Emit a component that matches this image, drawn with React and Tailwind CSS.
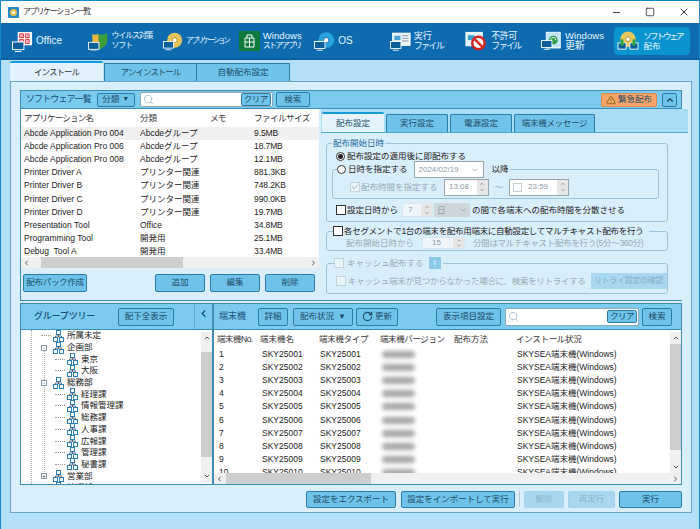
import { Minus, Square, X, Search, ChevronUp, ChevronDown, ChevronLeft, ChevronRight, RotateCw, TriangleAlert, Check } from 'lucide-react'

const apps = [
  ['Abcde Application Pro 004', 'Abcdeグループ', '9.5MB'],
  ['Abcde Application Pro 006', 'Abcdeグループ', '18.7MB'],
  ['Abcde Application Pro 008', 'Abcdeグループ', '12.1MB'],
  ['Printer Driver A', 'プリンター関連', '881.3KB'],
  ['Printer Driver B', 'プリンター関連', '748.2KB'],
  ['Printer Driver C', 'プリンター関連', '990.0KB'],
  ['Printer Driver D', 'プリンター関連', '19.7MB'],
  ['Presentation Tool', 'Office', '34.8MB'],
  ['Programming Tool', '開発用', '25.1MB'],
  ['Debug  Tool A', '開発用', '33.4MB'],
]

const tree = [
  [1, '所属未定'], [1, '企画部', '-'], [2, '東京'], [2, '大阪'], [1, '総務部', '-'],
  [2, '経理課'], [2, '情報管理課'], [2, '総務課'], [2, '人事課'], [2, '広報課'],
  [2, '管理課'], [2, '秘書課'], [1, '営業部', '+'], [1, '技術部', '+'],
]

const terminals = Array.from({ length: 10 }, (_, i) => i + 1)

function Monitor({ x = 0, y = 13 }) {
  return (
    <g transform={`translate(${x} ${y})`}>
      <rect x="0.5" y="0.5" width="12" height="8" fill="#0d5f9c" stroke="#fff" />
      <path d="M3 10.5h7" stroke="#fff" />
    </g>
  )
}

function ToolIcon({ name }) {
  if (name === 'office') return (
    <svg width="21" height="21" viewBox="0 0 22 22">
      <rect x="6" y="1" width="15" height="14" fill="#fff" />
      <path d="M8 3h4v4H8zM14 3h4v4h-4zM8 9h4v4H8zM14 9h4v4h-4z" fill="#fbd" stroke="#d8342c" />
      <Monitor x={0} y={11} />
    </svg>
  )
  if (name === 'virus') return (
    <svg width="21" height="20" viewBox="0 0 24 22">
      <path d="M12 3c4 1 6 1 10-1v9c0 5-5 8-10 10z" fill="#3f9c3a" />
      <path d="M12 3C9 4 7 4 5 3v9c0 3 3 7 7 9z" fill="#eab83c" />
      <Monitor x={0} y={12} />
    </svg>
  )
  if (name === 'app') return (
    <svg width="20" height="20" viewBox="0 0 24 22">
      <circle cx="14" cy="10" r="9" fill="#e6c25a" />
      <circle cx="14" cy="10" r="3" fill="#fff" stroke="#a98b2d" />
      <Monitor x={0} y={11} />
    </svg>
  )
  if (name === 'store') return (
    <svg width="21" height="20" viewBox="0 0 21 20">
      <rect width="21" height="20" fill="#0f7a3e" />
      <path d="M6 7h9v9H6zM8 7V4h5v3M10.500 7v9M6 11h9" fill="none" stroke="#fff" />
    </svg>
  )
  if (name === 'os') return (
    <svg width="21" height="20" viewBox="0 0 24 22">
      <circle cx="14" cy="10" r="9" fill="#29a3dc" />
      <circle cx="14" cy="10" r="3" fill="#fff" stroke="#0d5f9c" />
      <Monitor x={0} y={11} />
    </svg>
  )
  if (name === 'exe') return (
    <svg width="21" height="20" viewBox="0 0 24 22">
      <rect x="3" y="2" width="20" height="14" fill="#e7f3fa" stroke="#fff" />
      <rect x="5" y="5" width="7" height="5" fill="#4aa3d0" />
      <path d="M14 5h7M14 8h7M14 11h7" stroke="#889" />
      <Monitor x={0} y={11} />
    </svg>
  )
  if (name === 'ban') return (
    <svg width="23" height="22" viewBox="0 0 24 22">
      <rect x="1" y="2" width="17" height="14" fill="#dff1fa" stroke="#fff" />
      <rect x="3" y="5" width="7" height="5" fill="#37a0cf" />
      <circle cx="14" cy="13" r="6.500" fill="#fff" stroke="#d4231f" strokeWidth="2.500" />
      <path d="M10 9l8 8" stroke="#d4231f" strokeWidth="2.500" />
    </svg>
  )
  if (name === 'update') return (
    <svg width="21" height="20" viewBox="0 0 24 22">
      <rect x="6" y="1" width="16" height="18" fill="#bfe4f5" stroke="#fff" />
      <circle cx="14" cy="10" r="5" fill="#2f9c46" />
      <path d="M11 10a3 3 0 0 1 6 0" stroke="#fff" fill="none" />
      <Monitor x={0} y={10} />
    </svg>
  )
  return (
    <svg width="24" height="20" viewBox="0 0 26 22">
      <circle cx="13" cy="9" r="8.500" fill="#e6c95e" />
      <circle cx="13" cy="9" r="2.500" fill="#fff" stroke="#a98b2d" />
      <path d="M2 13h9v7H2zM15 13h9v7h-9z" fill="#0d5f9c" stroke="#fff" />
      <path d="M5 9h3v4h2l-3.500 4L3 13h2zM18 9h3v4h2l-3.500 4L16 13h2z" fill="#35a24a" />
    </svg>
  )
}

function ToolItem({ icon, lines, active }) {
  return (
    <div className={`flex h-[28px] items-center gap-[3px] rounded-sm pl-[2px] ${active ? 'bg-[#0a94cf]' : ''}`}>
      <ToolIcon name={icon} />
      <div className="flex flex-col leading-[10.500px] text-[#e8f6ff]">
        {lines.map(([t, c]) => <span key={t} className={c}>{t}</span>)}
      </div>
    </div>
  )
}

function Btn({ children, className = '', disabled }) {
  return (
    <button className={`flex items-center justify-center rounded-[2px] border text-[8.500px] ${disabled ? 'border-[#a4d3ea] bg-[#a8d8ef] text-[#8ab4c9]' : 'border-[#2a7da6] bg-[#6fc3ea] text-[#1c4d69]'} ${className}`}>
      {children}
    </button>
  )
}

function SearchBox({ className = '' }) {
  return (
    <div className={`flex items-center rounded-[2px] border border-[#8fa8b8] bg-white pl-[2px] ${className}`}>
      <Search size={11} className="text-[#a9c0d0]" />
      <Btn className="ml-auto h-[13px] w-[30px] tracking-[-0.500px]">クリア</Btn>
    </div>
  )
}

function HScroll({ left, thumb }) {
  return (
    <div className="flex h-[11px] shrink-0 items-center bg-[#f0f0f0] text-[#555]">
      <ChevronLeft size={8} strokeWidth={3} className="w-[11px] shrink-0" />
      <div className="h-full flex-1">
        <div className="h-full bg-[#cdcdcd]" style={{ width: thumb, marginLeft: left }} />
      </div>
      <ChevronRight size={8} strokeWidth={3} className="w-[11px] shrink-0" />
    </div>
  )
}

function VScroll({ thumbTop, thumb, className = '' }) {
  return (
    <div className={`flex w-[11px] shrink-0 flex-col items-center bg-[#f0f0f0] text-[#555] ${className}`}>
      <ChevronUp size={8} strokeWidth={3} className="h-[12px] shrink-0" />
      <div className="w-full flex-1">
        <div className="w-full bg-[#cdcdcd]" style={{ height: thumb, marginTop: thumbTop }} />
      </div>
      <ChevronDown size={8} strokeWidth={3} className="h-[12px] shrink-0" />
    </div>
  )
}

function Spin({ value, className = '', boxed, dim }) {
  return (
    <div className={`flex items-center border bg-white ${dim ? 'border-[#dbe6ee] text-[#8a9aa5]' : 'border-[#9aa5ad] text-[#8a9aa5]'} ${className}`}>
      {boxed && <span className="ml-[3px] h-[9px] w-[9px] border border-[#c3ccd2]" />}
      <span className="flex-1 pr-[3px] text-center text-[8px]">{value}</span>
      <span className="flex h-full w-[11px] flex-col items-center justify-center bg-[#e6e6e6] text-[#888]">
        <ChevronUp size={6} strokeWidth={3} />
        <ChevronDown size={6} strokeWidth={3} />
      </span>
    </div>
  )
}

function GroupIcon() {
  return (
    <svg width="11" height="12" viewBox="0 0 11 12" className="shrink-0">
      <path d="M5.500 3v4M2.500 8V6h6v2" stroke="#335" fill="none" strokeWidth="0.700" />
      <rect x="3.500" y="0.500" width="4" height="4" fill="#fff" stroke="#2a7fb8" />
      <rect x="0.500" y="7.500" width="4" height="4" fill="#fff" stroke="#2a7fb8" />
      <rect x="6.500" y="7.500" width="4" height="4" fill="#fff" stroke="#2a7fb8" />
    </svg>
  )
}

function TreeRow({ depth, label, toggle }) {
  return (
    <div className={`flex h-[11.700px] items-center ${depth === 1 ? 'pl-[20px]' : 'pl-[34px]'}`}>
      <span className="relative flex w-[12px] shrink-0 items-center">
        {toggle && (
          <span className="absolute left-0 flex h-[6px] w-[6px] items-center justify-center border border-[#8a9aa5] bg-white text-[6px] leading-none text-[#335]">{toggle}</span>
        )}
        {!toggle && <span className="h-0 w-[10px] border-t border-dotted border-[#999]" />}
      </span>
      <GroupIcon />
      <span className={`ml-[3px] text-[8.500px] leading-[11px] ${label === '総務部' ? 'bg-[#f0f0f0]' : ''}`}>{label}</span>
    </div>
  )
}

function Radio({ on, dim }) {
  return (
    <span className={`flex h-[9px] w-[9px] shrink-0 items-center justify-center rounded-full border bg-white ${dim ? 'border-[#aaa]' : 'border-[#333]'}`}>
      {on && <span className="h-[5px] w-[5px] rounded-full bg-[#222]" />}
    </span>
  )
}

function Box({ checked, dim }) {
  return (
    <span className={`flex h-[10px] w-[10px] shrink-0 items-center justify-center border ${dim ? 'border-[#c6d3dc] bg-[#eaf4fb]' : 'border-[#333] bg-white'}`}>
      {checked && <Check size={8} strokeWidth={3} className="text-[#9fb0bb]" />}
    </span>
  )
}

function SoftwareTable() {
  return (
    <div className="flex w-[298px] shrink-0 flex-col">
      <div className="flex h-[159px] flex-col overflow-hidden bg-white text-[#222]">
        <div className="flex h-[18px] shrink-0 items-center text-[#333]">
          <span className="w-[117px] pl-[3px] tracking-[-0.800px]">アプリケーション名</span>
          <span className="w-[70px] pl-[2px]">分類</span>
          <span className="w-[43px] pl-[2px] tracking-[-0.500px]">メモ</span>
          <span className="pl-[3px] tracking-[-0.500px]">ファイルサイズ</span>
        </div>
        <div className="min-h-0 flex-1 overflow-hidden">
          {apps.map((a, i) => (
            <div key={a[0]} className={`flex h-[13.100px] items-center whitespace-pre leading-[13px] ${i === 0 ? 'bg-[#f0f0f0]' : ''}`}>
              <span className="w-[117px] pl-[3px] text-[8.500px]">{a[0]}</span>
              <span className="w-[113px] pl-[2px]">{a[1]}</span>
              <span className="pl-[3px] tracking-[-0.100px]">{a[2]}</span>
            </div>
          ))}
        </div>
        <HScroll left={9} thumb={142} />
      </div>
      <div className="flex flex-1 items-center gap-[5px] pb-[3px] pl-[2px] pr-[4px]">
        <Btn className="mr-auto h-[18px] w-[64px] tracking-[-0.300px]">配布パック作成</Btn>
        <Btn className="h-[18px] w-[50px]">追加</Btn>
        <Btn className="h-[18px] w-[50px]">編集</Btn>
        <Btn className="h-[18px] w-[50px]">削除</Btn>
      </div>
    </div>
  )
}

function DistPanel() {
  return (
    <div className="flex flex-1 flex-col pl-[2px]">
      <div className="flex h-[24px] shrink-0 items-end gap-[2px] border-b border-[#4ea8d2] bg-[#a9dcf5] pl-[1px]">
        <div className="flex h-[20px] w-[62px] items-center justify-center rounded-t-[2px] border-t-2 border-[#159bd6] bg-[#e4f3fc] text-[#1c4d69]">配布設定</div>
        {[['実行設定', 'w-[62px]'], ['電源設定', 'w-[62px]'], ['端末機メッセージ', 'w-[81px] tracking-[-0.300px]']].map(([t, w]) => (
          <div key={t} className={`flex h-[18px] items-center justify-center rounded-t-[2px] border border-b-0 border-[#2a7da6] bg-[#6fc3ea] text-[#1c4d69] ${w}`}>{t}</div>
        ))}
      </div>
      <div className="flex flex-1 flex-col bg-[#d9eefb] pl-[5px] pr-[20px] text-[#222]">
        <fieldset className="mt-[4px] h-[85px] shrink-0 rounded-[3px] border border-[#9cc3da] pl-[5px] pr-[8px]">
          <legend className="px-[1px] leading-[12px] text-[#17669c]">配布開始日時</legend>
          <div className="mt-[1px] flex h-[13px] items-center gap-[2px] pl-[4px]"><Radio on />配布設定の適用後に即配布する</div>
          <fieldset className="mt-[-2px] h-[38px] rounded-[3px] border border-[#9cc3da]">
            <legend className="ml-[4px] flex h-[17px] items-center">
              <Radio /><span className="ml-[2px]">日時を指定する</span>
              <span className="ml-[6px] flex h-[17px] w-[70px] items-center justify-between border border-[#9aa5ad] bg-white px-[4px] text-[8px] text-[#8a9aa5]">2024/02/19<ChevronDown size={8} /></span>
              <span className="ml-[8px] pr-[1px]">以降</span>
            </legend>
            <div className="flex h-[18px] items-center pl-[17px] text-[#9aa9b3]">
              <Box checked dim /><span className="ml-[1px]">配布時間を指定する</span>
              <Spin value="13:08" className="ml-[6px] h-[17px] w-[45px]" />
              <span className="mx-[6px]">～</span>
              <Spin value="23:59" boxed className="h-[17px] w-[60px]" />
            </div>
          </fieldset>
          <div className="mt-[4px] flex h-[14px] items-center pl-[4px]">
            <Box /><span className="ml-[1px]">設定日時から</span>
            <Spin value="7" dim className="ml-[4px] h-[14px] w-[31px] !bg-[#eef6fc]" />
            <span className="ml-[1px] flex h-[14px] w-[36px] items-center justify-between bg-[#cfd6db] px-[3px] text-[#8a9aa5]">日<ChevronDown size={8} /></span>
            <span className="ml-[2px]">の間で各端末への配布時間を分散させる</span>
          </div>
        </fieldset>
        <fieldset className="mt-[2px] h-[27px] shrink-0 rounded-[3px] border border-[#9cc3da] pl-[5px]">
          <legend className="ml-[1px] flex h-[14px] items-center gap-[1px] pr-[6px] tracking-[-0.300px]"><Box />各セグメントで1台の端末を配布用端末に自動設定してマルチキャスト配布を行う</legend>
          <div className="-mt-[1px] flex h-[12px] items-center pl-[14px] text-[#9aa9b3]">
            配布開始日時から
            <Spin value="15" dim className="ml-[8px] mr-[8px] h-[12px] w-[43px] !bg-[#eef6fc]" />
            <span className="tracking-[-0.300px]">分間はマルチキャスト配布を行う(5分～360分)</span>
          </div>
        </fieldset>
        <fieldset className="mt-[5px] h-[38px] shrink-0 rounded-[3px] border border-[#9cc3da] pl-[5px] text-[#9aa9b3]">
          <legend className="ml-[2px] flex h-[14px] items-center gap-[3px] pr-[2px]">
            <Box dim />キャッシュ配布する
            <span className="ml-[2px] flex h-[12px] w-[12px] items-center justify-center bg-[#8cc9e8] text-[8px] text-white">i</span>
          </legend>
          <div className="flex h-[22px] items-center gap-[2px] pl-[4px] tracking-[-0.300px]">
            <Box dim />キャッシュ端末が見つからなかった場合に、検索をリトライする
            <span className="ml-[3px] flex h-[16px] w-[76px] items-center justify-center bg-[#a8d8ef] text-[8px] tracking-[-0.300px] text-[#7fb0c9]">リトライ設定の確認</span>
          </div>
        </fieldset>
      </div>
    </div>
  )
}

function GroupTree() {
  return (
    <div className="flex w-[193px] shrink-0 flex-col border border-[#3f8cb5]">
      <div className="flex h-[25px] shrink-0 items-center bg-[#7bcbee] pl-[13px]">
        <span className="text-[9px] font-medium tracking-[-0.200px] text-[#17507a]">グループツリー</span>
        <Btn className="ml-[23px] h-[18px] w-[56px]">配下全表示</Btn>
        <span className="ml-[20px] flex h-full flex-1 justify-center border-l border-[#5aa9d0] pt-[4px] text-[#17507a]"><ChevronLeft size={11} strokeWidth={3} /></span>
      </div>
      <div className="flex min-h-0 flex-1 border-t border-[#3f8cb5] bg-white text-[#222]">
        <div className="relative flex-1 overflow-hidden">
          <div className="absolute bottom-0 left-[10px] top-0 border-l border-dotted border-[#aaa]" />
          <div className="absolute bottom-[10px] left-[23px] top-[15px] border-l border-dotted border-[#aaa]" />
          <div className="mt-0">
            {tree.map((t, i) => <TreeRow key={i} depth={t[0]} label={t[1]} toggle={t[2]} />)}
          </div>
        </div>
        <VScroll thumbTop={8} thumb={105} className="my-[2px]" />
      </div>
    </div>
  )
}

function TerminalPanel() {
  return (
    <div className="flex flex-1 flex-col border border-[#3f8cb5]">
      <div className="flex h-[25px] shrink-0 items-center gap-[2px] bg-[#7bcbee] pl-[5px]">
        <span className="w-[37px] text-[9px] text-[#17507a]">端末機</span>
        <Btn className="h-[18px] w-[30px]">詳細</Btn>
        <Btn className="ml-[3px] h-[18px] w-[60px] gap-[4px]">配布状況<span className="text-[8px]">▼</span></Btn>
        <Btn className="ml-[1px] h-[18px] w-[42px] gap-[2px]"><RotateCw size={11} strokeWidth={2.500} />更新</Btn>
        <Btn className="ml-[36px] h-[18px] w-[65px]">表示項目設定</Btn>
        <SearchBox className="ml-[2px] h-[18px] w-[134px] pr-[1px]" />
        <Btn className="ml-[1px] h-[18px] w-[30px]">検索</Btn>
      </div>
      <div className="flex min-h-0 flex-1 flex-col border-t border-[#3f8cb5] bg-white text-[#222]">
        <div className="flex min-h-0 flex-1">
          <div className="flex-1 overflow-hidden">
            <div className="flex h-[18px] items-center text-[#333]">
              <span className="w-[44px] pl-[3px] tracking-[-0.500px]">端末機No.</span>
              <span className="w-[59px] pl-[2px]">端末機名</span>
              <span className="w-[60px] pl-[2px] tracking-[-0.300px]">端末機タイプ</span>
              <span className="w-[75px] pl-[3px] tracking-[-0.400px]">端末機バージョン</span>
              <span className="w-[62px] pl-[2px]">配布方法</span>
              <span className="pl-[2px] tracking-[-0.300px]">インストール状況</span>
            </div>
            {terminals.map(n => {
              const id = `SKY250${String(n).padStart(2, '0')}`
              return (
                <div key={n} className="flex h-[13.100px] items-center leading-[13px]">
                  <span className="w-[44px] pl-[5px]">{n}</span>
                  <span className="w-[59px] pl-[4px]">{id}</span>
                  <span className="w-[60px] pl-[3px]">{id}</span>
                  <span className="w-[137px] pl-[5px]"><span className="block h-[7px] w-[33px] rounded-sm bg-[#a5a5a5] blur-[2px]" /></span>
                  <span className="pl-[3px]">SKYSEA端末機(Windows)</span>
                </div>
              )
            })}
          </div>
          <VScroll thumbTop={0} thumb={106} className="mt-[2px]" />
        </div>
        <HScroll left={1} thumb={145} />
      </div>
    </div>
  )
}

export default function App() {
  const win = 'text-[9.500px] tracking-[0.100px]'
  const tools = [
    ['office', [['Office', 'text-[10px]']]],
    ['virus', [['ウイルス対策', 'text-[8px] tracking-[-1.200px]'], ['ソフト', 'text-[8px] tracking-[-1.200px]']]],
    ['app', [['アプリケーション', 'text-[7.500px] tracking-[-2.200px]']]],
    ['store', [['Windows', win], ['ストアアプリ', 'text-[8px] tracking-[-1.700px]']]],
    ['os', [['OS', 'text-[10px]']]],
    ['exe', [['実行', 'text-[9px]'], ['ファイル', 'text-[9px] tracking-[-1.700px]']]],
    ['ban', [['不許可', 'text-[9px] tracking-[-0.500px]'], ['ファイル', 'text-[9px] tracking-[-1.700px]']]],
    ['update', [['Windows', win], ['更新', 'text-[10px]']]],
    ['sw', [['ソフトウェア', 'text-[8.500px] tracking-[-2px]'], ['配布', 'text-[8.500px]']]],
  ]

  return (
    <div className="flex h-[529px] w-[700px] flex-col overflow-hidden whitespace-nowrap border-x border-[#1589cf] bg-[#b3e0f8] font-['Liberation_Sans','Noto_Sans_CJK_JP',sans-serif] text-[8.500px]">
      <div className="flex h-[23px] shrink-0 items-center border-t border-[#1589cf] bg-white pl-[7px]">
        <span className="flex h-[11px] w-[11px] items-center justify-center rounded-[1px] bg-[#2a88c4]">
          <span className="h-[7px] w-[7px] rounded-full border-2 border-[#e9c24e] bg-white" />
        </span>
        <span className="ml-[4px] text-[8px] tracking-[-1.300px] text-[#333]">アプリケーション一覧</span>
        <div className="ml-auto flex items-center gap-[23px] pr-[9px] text-[#333]">
          <Minus size={11} /><Square size={10} /><X size={12} />
        </div>
      </div>

      <div className="grid h-[37px] shrink-0 grid-cols-9 items-center border-b-2 border-[#0a5e9c] bg-[#0e6bb0] px-[9px] pt-[1px]">
        {tools.map((t, i) => <ToolItem key={t[0]} icon={t[0]} lines={t[1]} active={i === 8} />)}
      </div>

      <div className="flex h-[21px] shrink-0 items-end pl-[9px] text-[8.500px]">
        <div className="flex h-[20px] w-[93px] items-center justify-center rounded-t-[2px] border-t-2 border-[#159bd6] bg-[#e1f2fc] tracking-[-1px] text-[#333]">インストール</div>
        <div className="ml-[1px] flex h-[18px] w-[93px] items-center justify-center border border-b-0 border-[#2a7da6] bg-[#6fc3ea] tracking-[-1px] text-[#1c4d69]">アンインストール</div>
        <div className="flex h-[18px] w-[93px] items-center justify-center border border-b-0 border-l-0 border-[#2a7da6] bg-[#6fc3ea] text-[#1c4d69]">自動配布設定</div>
      </div>

      <div className="ml-[9px] mr-[7px] flex h-[432px] shrink-0 flex-col border border-[#6aa3c4] bg-[#d9eefb] px-[9px] pt-[8px]">
        <div className="flex h-[211px] shrink-0 flex-col border border-[#3f8cb5]">
          <div className="flex h-[18px] shrink-0 items-center gap-[3px] border-b border-[#3f8cb5] bg-[#7bcbee] pl-[5px] pr-[4px]">
            <span className="text-[9px] tracking-[-0.900px] text-[#17507a]">ソフトウェア一覧</span>
            <Btn className="ml-[3px] h-[14px] w-[38px] gap-[3px]">分類<span className="text-[7px]">▼</span></Btn>
            <SearchBox className="ml-[2px] h-[15px] w-[133px] pr-[1px]" />
            <Btn className="h-[15px] w-[34px]">検索</Btn>
            <Btn className="ml-auto h-[14px] w-[56px] gap-[2px] !border-[#d98a4a] !bg-[#f7a66a]"><TriangleAlert size={10} className="text-[#7a5a10]" />緊急配布</Btn>
            <Btn className="ml-[2px] h-[14px] w-[15px]"><ChevronUp size={10} strokeWidth={3} /></Btn>
          </div>
          <div className="flex min-h-0 flex-1">
            <SoftwareTable />
            <DistPanel />
          </div>
        </div>
        <div className="mt-[2px] flex h-[182px] shrink-0">
          <GroupTree />
          <TerminalPanel />
        </div>
        <div className="mt-[5px] flex h-[18px] items-center justify-end gap-[3px]">
          <Btn className="h-[17px] w-[90px]">設定をエクスポート</Btn>
          <Btn className="ml-[2px] h-[17px] w-[114px]">設定をインポートして実行</Btn>
          <span className="mx-[1px] h-[16px] border-l border-[#b5c8d4]" />
          <Btn disabled className="h-[17px] w-[40px]">解除</Btn>
          <Btn disabled className="ml-[1px] h-[17px] w-[47px]">再実行</Btn>
          <Btn className="ml-[1px] h-[17px] w-[63px]">実行</Btn>
        </div>
      </div>
    </div>
  )
}
